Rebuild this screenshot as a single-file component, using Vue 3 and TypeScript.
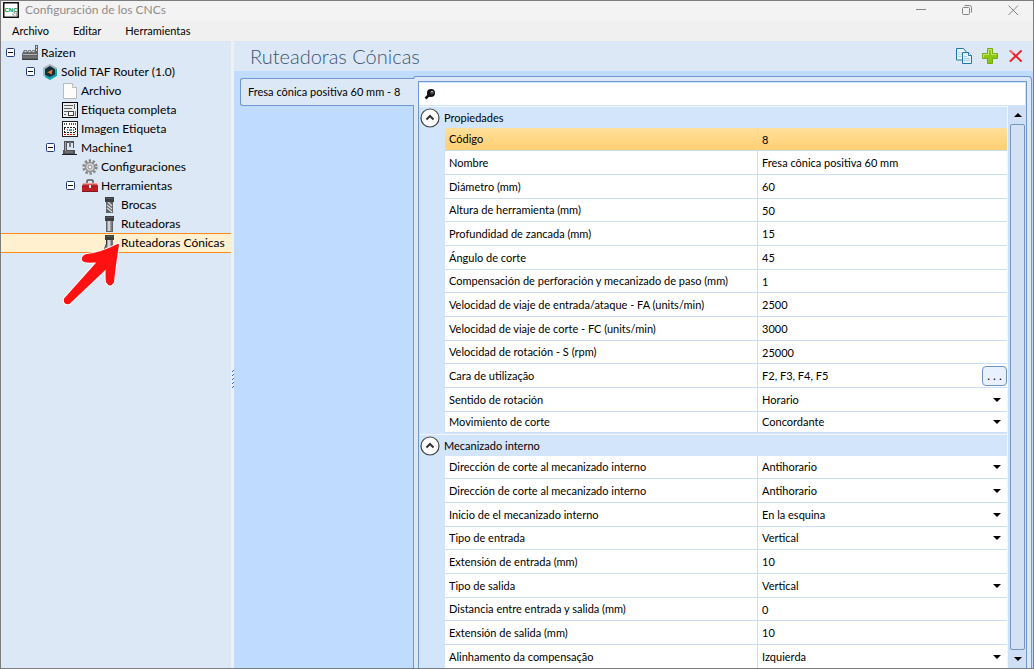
<script setup lang="ts">
import { ref } from 'vue'

type Kind = 'text' | 'list' | 'dialog'
interface Prop { label: string; value: string; kind: Kind }
interface Section { title: string; open: boolean; props: Prop[] }
interface Node { label: string; icon: string; depth: number; toggle?: boolean }

const nodes: Node[] = [
  { label: 'Raizen', icon: 'factory', depth: 0, toggle: true },
  { label: 'Solid TAF Router (1.0)', icon: 'router', depth: 1, toggle: true },
  { label: 'Archivo', icon: 'file', depth: 2 },
  { label: 'Etiqueta completa', icon: 'label', depth: 2 },
  { label: 'Imagen Etiqueta', icon: 'image', depth: 2 },
  { label: 'Machine1', icon: 'machine', depth: 2, toggle: true },
  { label: 'Configuraciones', icon: 'gear', depth: 3 },
  { label: 'Herramientas', icon: 'toolbox', depth: 3, toggle: true },
  { label: 'Brocas', icon: 'drill', depth: 4 },
  { label: 'Ruteadoras', icon: 'mill', depth: 4 },
  { label: 'Ruteadoras Cónicas', icon: 'cone', depth: 4 },
]
const selected = ref('Ruteadoras Cónicas')

const text = (label: string, value: string): Prop => ({ label, value, kind: 'text' })
const list = (label: string, value: string): Prop => ({ label, value, kind: 'list' })

const sections = ref<Section[]>([
  {
    title: 'Propiedades',
    open: true,
    props: [
      text('Código', '8'),
      text('Nombre', 'Fresa cônica positiva 60 mm'),
      text('Diámetro (mm)', '60'),
      text('Altura de herramienta (mm)', '50'),
      text('Profundidad de zancada (mm)', '15'),
      text('Ángulo de corte', '45'),
      text('Compensación de perforación y mecanizado de paso (mm)', '1'),
      text('Velocidad de viaje de entrada/ataque - FA (units/min)', '2500'),
      text('Velocidad de viaje de corte - FC (units/min)', '3000'),
      text('Velocidad de rotación - S (rpm)', '25000'),
      { label: 'Cara de utilização', value: 'F2, F3, F4, F5', kind: 'dialog' },
      list('Sentido de rotación', 'Horario'),
      list('Movimiento de corte', 'Concordante'),
    ],
  },
  {
    title: 'Mecanizado interno',
    open: true,
    props: [
      list('Dirección de corte al mecanizado interno', 'Antihorario'),
      list('Dirección de corte al mecanizado interno', 'Antihorario'),
      list('Inicio de el mecanizado interno', 'En la esquina'),
      list('Tipo de entrada', 'Vertical'),
      text('Extensión de entrada (mm)', '10'),
      list('Tipo de salida', 'Vertical'),
      text('Distancia entre entrada y salida (mm)', '0'),
      text('Extensión de salida (mm)', '10'),
      list('Alinhamento da compensação', 'Izquierda'),
    ],
  },
])
</script>

<template>
  <div class="window">
    <header class="titlebar">
      <svg class="app-icon" width="16" height="16" viewBox="0 0 16 16">
        <rect x=".75" y=".75" width="14.5" height="14.5" fill="#fff" stroke="#111" stroke-width="1.5" />
        <text x="8" y="10" text-anchor="middle">CNC</text>
        <circle cx="12" cy="12.500" r="1.800" fill="none" stroke="#999" stroke-width="1.600" stroke-dasharray="1.500 .6" />
      </svg>
      <span class="caption">Configuración de los CNCs</span>
      <div class="window-buttons">
        <button type="button" aria-label="Minimizar"><svg width="12" height="12"><path d="M1 5.500h10" /></svg></button>
        <button type="button" aria-label="Restaurar"><svg width="12" height="12"><rect x="1.500" y="3.500" width="7" height="7" rx="1" /><path d="M3.500 1.500H8.500Q10.500 1.500 10.500 3.500V8.500" /></svg></button>
        <button type="button" aria-label="Cerrar"><svg width="12" height="12"><path d="M1.500 1.500l9.500 9.500M11 1.500L1.500 11" /></svg></button>
      </div>
    </header>

    <nav class="menu">
      <button type="button">Archivo</button>
      <button type="button">Editar</button>
      <button type="button">Herramientas</button>
    </nav>

    <div class="body">
      <aside class="sidebar">
        <ul class="tree">
          <li v-for="n in nodes" :key="n.label" :class="['d' + n.depth, { selected: selected === n.label }]">
            <button v-if="n.toggle" type="button" class="toggle" :aria-label="'Contraer ' + n.label">
              <svg width="9" height="9"><rect x=".5" y=".5" width="8" height="8" rx="1" fill="#fff" stroke="#233c78" /><path d="M2 4.500h5" stroke="#111" /></svg>
            </button>
            <span v-else class="toggle"></span>
            <button type="button" class="node" @click="selected = n.label">
              <svg width="16" height="16" viewBox="0 0 16 16">
                <g v-if="n.icon === 'factory'">
                  <path d="M0 15V9l2-4h3v2l1.500-2H9v2l1.500-2H13V0h3v15z" fill="#5f6163" />
                  <path d="M2.500 6.500h2M6.500 6.500h2M10.500 6.500h2" stroke="#d6d8da" stroke-width="1.400" />
                  <path d="M14.500 1v2M14.500 4v2" stroke="#ddd" />
                  <path d="M1 9.500h14" stroke="#b5b7b9" />
                  <path d="M1 12h14" stroke="#7c7e80" />
                  <path d="M0 14.500h16" stroke="#3a3a3a" />
                </g>
                <g v-else-if="n.icon === 'router'">
                  <path d="M8 0l7 3.800v8L8 16l-7-4.200v-8z" fill="#a9b4b9" />
                  <path d="M8 2l5 3v6l-5 3-5-3V5z" fill="#12303b" />
                  <path d="M1 4l2 1v6l-2 .800z" fill="#8fc3cc" />
                  <path d="M15 5v6.800L8 16l-5-3 1.500-1.500L8 13l5-2.500V6z" fill="#14a5b2" />
                  <path d="M8 4l3.500 2v4L8 12l-3.500-2V6z" fill="#1d2b31" />
                  <path d="M5 8.500l5.500-3-1 5.500-2-2z" fill="#ed7b32" />
                </g>
                <g v-else-if="n.icon === 'file'">
                  <path d="M1.500 .500h9l4 4v11h-13z" fill="#fcfcfc" stroke="#b8babc" />
                  <path d="M10.500 .500v4h4" fill="#eee" stroke="#b8babc" />
                </g>
                <g v-else-if="n.icon === 'label'">
                  <rect x=".5" y=".5" width="15" height="15" fill="#ededed" stroke="#000" />
                  <path d="M2 3.500h9M2 6.500h8M2 9.500h6M2 12.500h2M12.500 2v5" stroke="#5c6168" />
                  <rect x="6.500" y="9.500" width="5" height="4" fill="#fff" stroke="#444" /><path d="M13.500 9v5" stroke="#777" />
                </g>
                <g v-else-if="n.icon === 'image'">
                  <rect x=".5" y=".5" width="15" height="15" fill="#fff" stroke="#222" />
                  <path d="M2.500 2v2M4.500 2v2M7.500 2v2M9.500 2v2M11.500 2v2M13.500 2v2" stroke="#555" />
                  <path d="M2 6.500h12M2 11.500h12M2.500 7v4M13.500 7v4" stroke="#222" stroke-dasharray="2 1" />
                  <path d="M5 9h1M7 9h3M11 9h1" stroke="#111" /><path d="M2 13.500h12" stroke="#e00" stroke-dasharray="2 1" />
                </g>
                <g v-else-if="n.icon === 'machine'">
                  <path d="M2 1h10v7h-1V3H5v7h8v5H1v-5h1z" fill="#505255" />
                  <path d="M7 2h2v5H7z" fill="#77797c" /><path d="M3.500 2v9" stroke="#a2a4a7" /><path d="M3 12h8" stroke="#8c8e91" /><path d="M0 14.500h15" stroke="#222" />
                </g>
                <g v-else-if="n.icon === 'gear'">
                  <circle cx="8" cy="8" r="6.300" fill="none" stroke="#888" stroke-width="2.800" stroke-dasharray="2.300 1.650" />
                  <circle cx="8" cy="8" r="4.500" fill="#dadada" stroke="#929292" stroke-width="1.500" />
                  <circle cx="8" cy="8" r="2" fill="#f2f2f2" stroke="#8c8c8c" />
                </g>
                <g v-else-if="n.icon === 'toolbox'">
                  <path d="M5 5V3q0-1 1-1h4q1 0 1 1v2" fill="none" stroke="#555" stroke-width="1.500" />
                  <path d="M1 5h14l1 4H0z" fill="#e25151" /><path d="M0 8h16v6H0z" fill="#bd2025" /><path d="M0 8h16" stroke="#821317" /><path d="M1 5.500h14" stroke="#f39b93" />
                  <rect x="7" y="7" width="2" height="3" fill="#eee" /><path d="M0 13.500h16" stroke="#83191b" />
                </g>
                <g v-else>
                  <path v-if="n.icon === 'cone'" d="M4 5h7v6l3 5H1l3-7z" fill="#707376" />
                  <path v-else d="M4 5h7v11H4z" fill="#606366" />
                  <path v-if="n.icon === 'cone'" d="M4 9v6H1z" fill="#f5f5f5" />
                  <path v-if="n.icon === 'cone'" d="M7 5v10" stroke="#d5d7d9" stroke-width="3" />
                  <path v-if="n.icon === 'cone'" d="M4.500 5v4l-3 7" fill="none" stroke="#333" />
                  <path v-if="n.icon === 'mill'" d="M7 5v10" stroke="#d0d2d4" stroke-width="3" />
                  <path v-if="n.icon === 'mill'" d="M9 5v10" stroke="#9a9c9e" />
                  <path v-if="n.icon === 'drill'" d="M5 8l5 4M5 11l5 4M6 5l4 4" stroke="#dedede" stroke-width="1.300" />
                  <path d="M3 0h9v5H3z" fill="#3d3e40" /><path d="M4 1.500h7" stroke="#57595b" />
                </g>
              </svg>
              <span>{{ n.label }}</span>
            </button>
          </li>
        </ul>
        <svg class="pointer" width="58" height="66" viewBox="0 0 58 66">
          <path d="M55 4Q37 13 24 14 19 15 20 19 22 22 36 20L2 58Q1 63 6 62L44 26Q43 34 44 41 47 46 50 41 52 22 55 4Z" fill="#f11" stroke="#fff" stroke-width="4" stroke-linejoin="round" />
          <path d="M55 4Q37 13 24 14 19 15 20 19 22 22 36 20L2 58Q1 63 6 62L44 26Q43 34 44 41 47 46 50 41 52 22 55 4Z" fill="#f11" stroke="#f11" stroke-width="2" stroke-linejoin="round" />
        </svg>
      </aside>

      <div class="splitter"><svg width="3" height="20"><path d="M1 2.500h1M1 6.500h1M1 10.500h1M1 14.500h1M1 18.500h1M2 1.500h1M2 5.500h1M2 9.500h1M2 13.500h1M2 17.500h1" stroke="#2e68b4" /></svg></div>

      <main class="content">
        <div class="heading">
          <h1>Ruteadoras Cónicas</h1>
          <div class="actions">
            <button type="button" aria-label="Copiar">
              <svg width="16" height="16"><path d="M.5 .500h7L10 3.500V12H.500z" fill="#eaf5fb" stroke="#2277a6" /><path d="M2 4.500h4M2 6.500h5M2 8.500h5" stroke="#b7d9e9" /><path d="M6.500 4.500h6l3 3v8h-9z" fill="#e4f4fb" stroke="#2277a6" /><path d="M12.500 4.500v3h3" fill="#fff" stroke="#2277a6" /><path d="M8 8.500h3M8 10.500h6M8 12.500h6" stroke="#a5cfe2" /></svg>
            </button>
            <button type="button" aria-label="Añadir">
              <svg width="16" height="16"><path d="M5.500 .500h5v5h5v5h-5v5h-5v-5h-5v-5h5z" fill="#8cc812" stroke="#79a817" /><path d="M6.500 6.500v-5h3v5h5M1.500 9.500v-3h5" fill="none" stroke="#c4e66e" /></svg>
            </button>
            <button type="button" aria-label="Eliminar">
              <svg width="16" height="16"><path d="M2.500 3L13 13M13 3L2.500 13" stroke="#e9272b" stroke-width="2" stroke-linecap="round" /><path d="M2 2.500l3 3" stroke="#ff7775" stroke-width="1.500" /></svg>
            </button>
          </div>
        </div>

        <div class="workspace">
          <div class="tabs"><button type="button" class="tab">Fresa cônica positiva 60 mm - 8</button></div>
          <section class="panel">
            <div class="grid-box">
              <label class="search">
                <svg width="12" height="12"><path d="M1.500 10.500l4-4" stroke="#111" stroke-width="2.500" /><circle cx="7" cy="5" r="4" fill="#111" /><circle cx="8" cy="4.500" r="1.800" fill="#46535f" /><path d="M7 3.500h2" stroke="#a9bccc" /></svg>
                <input type="text" aria-label="Buscar">
              </label>
              <div class="grid-area">
                <div class="sections">
                  <section v-for="(s, si) in sections" :key="s.title" class="section">
                    <button type="button" class="section-head" :aria-expanded="s.open" @click="s.open = !s.open">
                      <svg width="20" height="20"><circle cx="10" cy="10" r="9" fill="#fff" stroke="#444" stroke-width="1.200" /><path d="M6.500 11.500l3.500-3.500 3.500 3.500" fill="none" stroke="#333" stroke-width="2" /></svg>
                      <span>{{ s.title }}</span>
                    </button>
                    <table v-if="s.open">
                      <tbody>
                        <tr v-for="(p, i) in s.props" :key="i" :class="{ current: si === 0 && i === 0 }">
                          <th scope="row"><label :for="`p${si}-${i}`">{{ p.label }}</label></th>
                          <td>
                            <div class="value">
                              <select v-if="p.kind === 'list'" :id="`p${si}-${i}`"><option>{{ p.value }}</option></select>
                              <input v-else :id="`p${si}-${i}`" v-model="p.value" type="text">
                              <svg v-if="p.kind === 'list'" class="arrow" width="8" height="4"><path d="M0 0h8L4 4z" /></svg>
                              <button v-if="p.kind === 'dialog'" type="button" class="more" :aria-label="'Editar ' + p.label">. . .</button>
                            </div>
                          </td>
                        </tr>
                      </tbody>
                    </table>
                  </section>
                </div>
                <div class="scrollbar">
                  <button type="button" aria-label="Subir"><svg width="8" height="4"><path d="M0 4h8L4 0z" /></svg></button>
                  <div class="thumb"></div>
                  <button type="button" aria-label="Bajar"><svg width="8" height="4"><path d="M0 0h8L4 4z" /></svg></button>
                </div>
              </div>
            </div>
          </section>
        </div>
      </main>
    </div>
  </div>
</template>

<style>
body { margin: 0; }
</style>

<style scoped>
* { box-sizing: border-box; }
.window {
  display: flex;
  flex-direction: column;
  height: 100vh;
  overflow: hidden;
  border: 1px solid #7d7d7d;
  background: #f0f0f0;
  color: #000;
  font: 12px/18px Lato, "Open Sans", sans-serif;
}
button { padding: 0; border: 0; background: none; color: inherit; font: inherit; }
svg { display: block; flex: none; }
.titlebar { display: flex; align-items: center; height: 20px; padding: 0 14px 2px 2px; background: #f3f3f3; color: #8e8e8e; }
.app-icon text { fill: #078a1c; font: 700 6px/6px "Liberation Sans", sans-serif; }
.caption { padding-left: 6px; }
.window-buttons { display: flex; margin-left: auto; gap: 34px; }
.window-buttons svg { fill: none; stroke: #858585; }
.menu { display: flex; height: 20px; padding-left: 11px; gap: 24px; font-size: 11px; }
.body { display: flex; flex: 1; min-height: 0; }
.sidebar { position: relative; flex: none; width: 230px; background: #dde8f6; }
.tree { margin: 0; padding: 2px 0 0; list-style: none; }
.tree li { display: flex; align-items: center; height: 19px; padding-left: 5px; }
.tree .d1 { padding-left: 25px; }
.tree .d2 { padding-left: 45px; }
.tree .d3 { padding-left: 65px; }
.tree .d4 { padding-left: 85px; }
.tree .selected { height: 20px; background: #fff0d0; box-shadow: inset 0 1px #ff8a15, inset 0 -1px #ff8a15; }
.toggle { flex: none; width: 16px; }
.node { display: flex; align-items: center; gap: 3px; white-space: nowrap; }
.pointer { position: absolute; left: 62px; top: 200px; }
.splitter { display: flex; flex: none; align-items: center; width: 3px; padding-top: 48px; background: #f0f0f0; }
.content { display: flex; flex: 1; flex-direction: column; min-width: 0; background: #bfdbff; }
.heading { display: flex; flex: none; align-items: center; justify-content: space-between; height: 30px; padding: 0 9px 0 16px; background: #dde8f6; }
h1 { margin: 0; color: #3b5471; font: 300 20px/28px Lato, "Open Sans", sans-serif; }
.actions { display: flex; gap: 10px; }
.workspace { display: flex; flex: 1; min-height: 0; padding: 5px 1px 0 6px; }
.tabs { z-index: 1; flex: none; width: 174px; padding-top: 2px; }
.tab { width: 100%; height: 28px; padding-left: 7px; border: 1px solid #6f97d2; border-right: 0; border-radius: 3px 0 0 3px; background: #dde8f6; font-size: 11px; text-align: left; white-space: nowrap; }
.panel { display: flex; flex: 1; min-width: 0; margin-left: -1px; padding: 4px 4px 0; border: 1px solid #6f97d2; border-bottom: 0; border-radius: 3px 4px 0 0; background: #dde8f6; }
.grid-box { display: flex; flex: 1; flex-direction: column; min-width: 0; border: 1px solid #6f97d2; border-bottom: 0; background: #d3e5fb; font-size: 11px; }
.search { display: flex; flex: none; align-items: center; height: 22px; margin: 1px 1px 1px 0; padding-left: 5px; background: #fff; }
.search input { flex: 1; height: 20px; border: 0; outline: 0; background: none; font: inherit; }
.grid-area { display: flex; flex: 1; min-height: 0; }
.sections { flex: 1; min-width: 0; overflow: hidden; }
.section { margin-bottom: 1px; }
.section-head { display: flex; align-items: center; width: 100%; height: 22px; padding-left: 1px; gap: 4px; border-top: 1px solid #f3f8ff; }
table { width: calc(100% - 26px); margin-left: 26px; border-collapse: separate; border-spacing: 0; table-layout: fixed; background: #fff; }
tr { height: 24px; }
tr:nth-child(3n + 1) { height: 23px; }
tr:nth-child(13) { height: 21px; }
th, td { height: inherit; padding: 0 0 0 4px; border-bottom: 1px solid #cbdef5; font-weight: 400; text-align: left; white-space: nowrap; line-height: 18px; }
th { width: 55.700%; border-right: 1px solid #cbdef5; }
.current th, .current td { border-right-color: #efd8a0; background: linear-gradient(#ffdf9a, #ffd073); }
.value { position: relative; display: flex; align-items: center; height: 20px; }
.value input, .value select { flex: 1; min-width: 0; height: 20px; padding: 0; border: 0; outline: 0; appearance: none; background: none; color: #000; font: inherit; }
.arrow { position: absolute; right: 6px; pointer-events: none; }
.more { width: 25px; height: 20px; border: 1px solid #6f92c0; border-radius: 4px; background: #e8f1fd; font-size: 12px; text-align: center; }
.scrollbar { display: flex; flex: none; flex-direction: column; width: 19px; padding: 0 1px 0 2px; border-left: 1px solid #f1f7ff; background: #cfdff5; }
.scrollbar button { display: flex; flex: none; align-items: center; justify-content: center; height: 18px; }
.thumb { flex: 1; border: 1px solid #7594c2; border-radius: 2px; background: #d3e2f2; }
</style>
